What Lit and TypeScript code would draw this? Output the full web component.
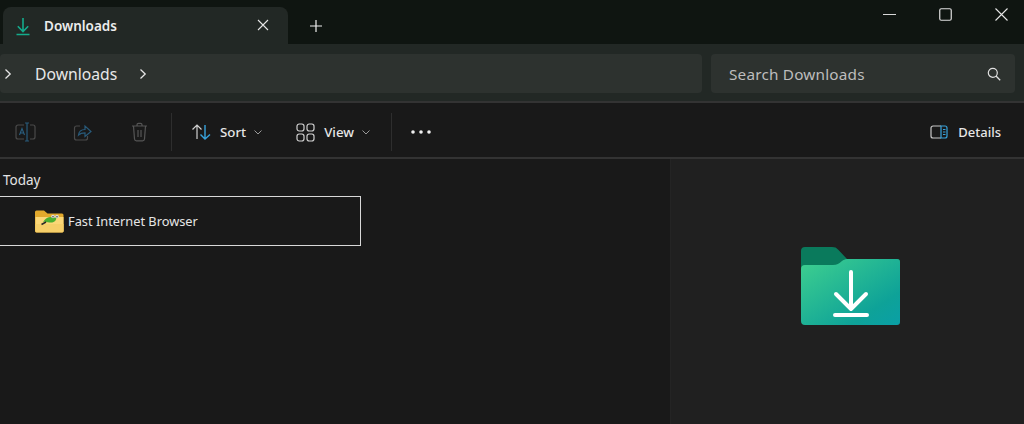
import { LitElement, html, css, svg } from "lit";
import { customElement } from "lit/decorators.js";

const chev = svg`<svg class="chev" width="8" height="12" viewBox="0 0 8 12"><path d="M1.500 1.500 6.200 6 1.500 10.500" fill="none" stroke="#e6e6e6" stroke-width="1.300"/></svg>`;
const down = svg`<svg class="down" width="8" height="5" viewBox="0 0 8 5"><path d="M.5.500 4 4 7.500.500" fill="none" stroke="#9a9a9a" stroke-width="1"/></svg>`;

@customElement("app-root")
export class AppRoot extends LitElement {
  static styles = css`
    :host { display: block; width: 1024px; height: 424px; overflow: hidden; background: #191919; font-family: "Noto Sans", "Open Sans", sans-serif; color: #f0f0f0; }
    svg { display: block; flex: none; }
    .title { height: 44px; background: #0f1511; display: flex; align-items: flex-end; }
    .tab { margin-left: 3px; width: 285px; height: 37px; box-sizing: border-box; background: #222825; border-radius: 8px 8px 0 0; display: flex; align-items: center; padding: 1px 0 0 13px; font-size: 13.500px; font-weight: 600; }
    .tab-label { margin-left: 12px; flex: 1; color: #ececec; }
    .tab-x { margin-right: 19px; margin-top: -2px; }
    .plus { margin-left: 22px; margin-bottom: 12px; }
    .spacer { flex: 1; }
    .win { display: flex; align-items: center; align-self: flex-start; margin-top: 8px; margin-right: 16px; gap: 43px; }
    .bar { height: 57px; box-sizing: border-box; background: #222825; display: flex; gap: 9px; padding: 10px 9px 8px 0; }
    .addr, .search { height: 39px; background: #2d322f; border-radius: 4px; display: flex; align-items: center; box-sizing: border-box; font-size: 15.700px; }
    .addr { width: 702px; padding-left: 4px; color: #e8e8e8; }
    .addr-text { margin: 0 22px 0 23px; }
    .search { flex: 1; padding: 0 14px 0 18px; color: #bdbdbd; justify-content: space-between; font-size: 15.300px; letter-spacing: .2px; }
    .tools { height: 58px; padding-top: 4px; background: #191919; border-top: 2px solid #333; border-bottom: 2px solid #333; box-sizing: border-box; display: flex; align-items: center; font-size: 13.300px; font-weight: 500; color: #e6e6e6; }
    .tools .ico { margin-left: 15px; }
    .tools .t2 { margin-left: 37px; }
    .tools .t3 { margin-left: 39px; }
    .sep { width: 1px; height: 38px; background: #2e2e2e; }
    .s1 { margin-left: 23px; }
    .s2 { margin-left: 21px; margin-right: 19px; }
    .sort { margin-left: 19px; display: flex; align-items: center; gap: 8px; }
    .view { margin-left: 34px; display: flex; align-items: center; gap: 8px; }
    .view svg:first-child { margin-right: 1px; }
    .details { margin-left: auto; margin-right: 23px; display: flex; align-items: center; gap: 10px; font-size: 13px; }
    .main { display: grid; grid-template-columns: 670px 1fr; height: 265px; }
    .list { background: #191919; padding-top: 11px; }
    .group { font-size: 13.500px; color: #e4e4e4; padding-left: 3px; height: 26px; line-height: 20px; }
    .row { width: 362px; height: 50px; margin-left: -1px; box-sizing: border-box; border: 1px solid #d8d8d8; display: flex; align-items: center; padding-left: 34px; gap: 4px; font-size: 12.800px; color: #e6e6e6; }
    .panel { background: #202020; border-left: 1px solid #242424; display: flex; justify-content: center; padding: 87px 0 0 7px; box-sizing: border-box; }
  `;

  render() {
    return html`
      <div class="title">
        <div class="tab">
          <svg width="16" height="19" viewBox="0 0 16 19"><path d="M7 1v13.500M1.800 9.200 7 14.500l5.200-5.300M.500 17.500h13" fill="none" stroke="#14ab8c" stroke-width="1.600"/></svg>
          <span class="tab-label">Downloads</span>
          <svg class="tab-x" width="12" height="12" viewBox="0 0 12 12"><path d="M1 1l10 10M11 1 1 11" stroke="#e6e6e6" stroke-width="1.100"/></svg>
        </div>
        <svg class="plus" width="12" height="12" viewBox="0 0 12 12"><path d="M6 0v12M0 6h12" stroke="#f0f0f0" stroke-width="1.200"/></svg>
        <div class="spacer"></div>
        <div class="win">
          <svg width="13" height="13" viewBox="0 0 13 13"><path d="M0 6.500h13" stroke="#d8d8d8" stroke-width="1"/></svg>
          <svg width="13" height="13" viewBox="0 0 13 13"><rect x=".750" y=".750" width="11.500" height="11.500" rx="1.500" fill="none" stroke="#e0e0e0" stroke-width="1.200"/></svg>
          <svg width="13" height="13" viewBox="0 0 13 13"><path d="M.500.500l12 12M12.500.500l-12 12" stroke="#e6e6e6" stroke-width="1.100"/></svg>
        </div>
      </div>
      <div class="bar">
        <div class="addr">${chev}<span class="addr-text">Downloads</span>${chev}</div>
        <div class="search"><span>Search Downloads</span>
          <svg width="14" height="14" viewBox="0 0 14 14"><circle cx="5.800" cy="5.800" r="4.500" fill="none" stroke="#e0e0e0" stroke-width="1.200"/><path d="M9 9l4.200 4.200" stroke="#e0e0e0" stroke-width="1.300"/></svg>
        </div>
      </div>
      <div class="tools">
        <svg class="ico" width="21" height="20" viewBox="0 0 21 20"><path d="M9 3H3a2 2 0 0 0-2 2v10a2 2 0 0 0 2 2h6M15 3h3a2 2 0 0 1 2 2v10a2 2 0 0 1-2 2h-3" fill="none" stroke="#4a4a4a" stroke-width="1.200"/><path d="M10 1h4M12 1v18M10 19h4" fill="none" stroke="#285a7a" stroke-width="1.200"/><path d="M4.500 13 7 6.500 9.500 13M5.500 11h3" fill="none" stroke="#2a5f80" stroke-width="1.100"/></svg>
        <svg class="ico t2" width="19" height="20" viewBox="0 0 19 20"><path d="M7 4H3.500A2 2 0 0 0 1.500 6v10a2 2 0 0 0 2 2h9a2 2 0 0 0 2-2v-2" fill="none" stroke="#4a4a4a" stroke-width="1.200"/><path d="M5.500 13c.400-3.500 3-5.500 6.500-5.500V4l6 5.500-6 5v-3.600c-2.700 0-5 .600-6.500 2.100z" fill="none" stroke="#285a7a" stroke-width="1.200"/></svg>
        <svg class="ico t3" width="17" height="20" viewBox="0 0 17 20"><path d="M1 4h15M6 4V2.800A1.500 1.500 0 0 1 7.500 1.300h2A1.500 1.500 0 0 1 11 2.800V4M2.500 4l1 13a2 2 0 0 0 2 1.800h6a2 2 0 0 0 2-1.800l1-13M7 8v7M10 8v7" fill="none" stroke="#555" stroke-width="1.200"/></svg>
        <div class="sep s1"></div>
        <div class="sort">
          <svg width="21" height="18" viewBox="0 0 21 18"><path d="M6 16V2M1.500 6.500 6 2l4.500 4.500" fill="none" stroke="#d0d0d0" stroke-width="1.200"/><path d="M14 2v14M9.500 11.500 14 16l5-4.500" fill="none" stroke="#38a3dc" stroke-width="1.400"/></svg>
          <span>Sort</span>${down}
        </div>
        <div class="view">
          <svg width="19" height="19" viewBox="0 0 19 19" fill="none" stroke="#d0d0d0" stroke-width="1.200"><rect x="1" y="1" width="7" height="7" rx="2.200"/><rect x="11" y="1" width="7" height="7" rx="2.200"/><rect x="1" y="11" width="7" height="7" rx="2.200"/><rect x="11" y="11" width="7" height="7" rx="2.200"/></svg>
          <span>View</span>${down}
        </div>
        <div class="sep s2"></div>
        <svg width="20" height="4" viewBox="0 0 20 4" fill="#f0f0f0"><circle cx="2" cy="2" r="1.800"/><circle cx="10" cy="2" r="1.800"/><circle cx="18" cy="2" r="1.800"/></svg>
        <div class="details">
          <svg width="18" height="14" viewBox="0 0 18 14"><path d="M11 1H3a2 2 0 0 0-2 2v8a2 2 0 0 0 2 2h8" fill="none" stroke="#c8c8c8" stroke-width="1.200"/><path d="M11 1h4a2 2 0 0 1 2 2v8a2 2 0 0 1-2 2h-4z" fill="none" stroke="#38a3dc" stroke-width="1.200"/><path d="M13 4.500h2.500M13 7h2.500M13 9.500h2.500" stroke="#38a3dc" stroke-width="1"/></svg>
          <span>Details</span>
        </div>
      </div>
      <div class="main">
        <div class="list">
          <div class="group">Today</div>
          <div class="row">
            <svg width="30" height="24" viewBox="0 0 30 24"><path d="M1 3a1.500 1.500 0 0 1 1.500-1.500h7.500l3.500 3H28a1.500 1.500 0 0 1 1.500 1.500v16a1.500 1.500 0 0 1-1.500 1.500H2.500A1.500 1.500 0 0 1 1 22z" fill="#e2a92c"/><path d="M1.500 8h28v14a1.200 1.200 0 0 1-1.200 1.200H2.700A1.200 1.200 0 0 1 1.500 22z" fill="#fbd777"/><path d="M1.500 15h28v7a1.200 1.200 0 0 1-1.200 1.200H2.700A1.200 1.200 0 0 1 1.500 22z" fill="#f6cf69"/><path d="M9 13c2-3 4-4.500 7-5l6 .500c1 2-1 4.500-4 5-3 .600-6-1.500-9-.500z" fill="#4caf2f"/><path d="M7.500 15.500 12 13" stroke="#2a2a2a" stroke-width="1.500"/><circle cx="19" cy="7.500" r="1.800" fill="#dcdcdc"/><circle cx="23" cy="7.500" r="1.800" fill="#dcdcdc"/><circle cx="19" cy="7.800" r=".700" fill="#333"/><circle cx="23" cy="7.800" r=".700" fill="#333"/></svg>
            <span>Fast Internet Browser</span>
          </div>
        </div>
        <div class="panel">
          <svg width="102" height="80" viewBox="0 0 102 80">
            <defs><linearGradient id="g" x1="0" y1="0" x2="1" y2="1"><stop offset="0" stop-color="#3fd08f"/><stop offset=".75" stop-color="#0ea298"/><stop offset="1" stop-color="#0a9fa6"/></linearGradient></defs>
            <path d="M1 5a4 4 0 0 1 4-4h27c3 0 4.500.800 6 2.500L47 13H97a3 3 0 0 1 3 3v6H1z" fill="#0a7a5c"/>
            <path d="M1 23a4 4 0 0 1 4-4h28c4 0 6-1.500 9-4 1.500-1 3-2 5-2H97a3 3 0 0 1 3 3v60a3 3 0 0 1-3 3H5a4 4 0 0 1-4-4z" fill="url(#g)"/>
            <path d="M51 26v37M36 48l15 15 15-15M35 69h32" fill="none" stroke="#fff" stroke-width="4" stroke-linecap="round" stroke-linejoin="round"/>
          </svg>
        </div>
      </div>
    `;
  }
}
